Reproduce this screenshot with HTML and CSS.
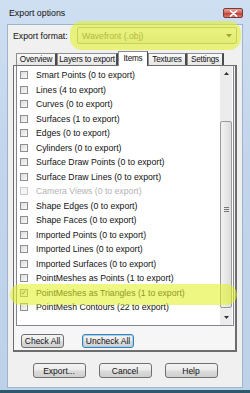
FILE: index.html
```html
<!DOCTYPE html>
<html lang="en">
<head>
  <meta charset="UTF-8" />
  <title>Export options</title>
  <meta name="viewport" content="width=device-width, initial-scale=1" />
  <link rel="stylesheet" href="styles.css">
</head>
<body>

  <div class="window">
    <div class="titlebar">
      <span class="title">Export options</span>
      <span class="close" aria-label="Close">
        <svg width="9" height="7" viewBox="0 0 9 7"><path d="M1.5 0.8 L7.5 6.2 M7.5 0.8 L1.5 6.2" stroke="#fff" stroke-width="1.6" stroke-linecap="round"/></svg>
      </span>
    </div>

    <div class="client">
      <div class="format-row">
        <label for="format">Export format:</label>
        <div class="select" id="format">
          <span>Wavefront (.obj)</span>
          <svg class="arrow" width="6" height="4" viewBox="0 0 6 4"><path d="M0 0 H6 L3 3.5 Z" fill="#444"/></svg>
        </div>
      </div>

      <div class="tabs">
        <span class="tab tab-overview">Overview</span>
        <span class="tab tab-layers">Layers to export</span>
        <span class="tab tab-items active">Items</span>
        <span class="tab tab-textures">Textures</span>
        <span class="tab tab-settings">Settings</span>
      </div>

      <div class="panel">
        <div class="listbox">
          <ul class="items">
            <li><span class="check"></span>Smart Points (0 to export)</li>
            <li><span class="check"></span>Lines (4 to export)</li>
            <li><span class="check"></span>Curves (0 to export)</li>
            <li><span class="check"></span>Surfaces (1 to export)</li>
            <li><span class="check"></span>Edges (0 to export)</li>
            <li><span class="check"></span>Cylinders (0 to export)</li>
            <li><span class="check"></span>Surface Draw Points (0 to export)</li>
            <li><span class="check"></span>Surface Draw Lines (0 to export)</li>
            <li class="disabled"><span class="check"></span>Camera Views (0 to export)</li>
            <li><span class="check"></span>Shape Edges (0 to export)</li>
            <li><span class="check"></span>Shape Faces (0 to export)</li>
            <li><span class="check"></span>Imported Points (0 to export)</li>
            <li><span class="check"></span>Imported Lines (0 to export)</li>
            <li><span class="check"></span>Imported Surfaces (0 to export)</li>
            <li><span class="check"></span>PointMeshes as Points (1 to export)</li>
            <li class="checked"><span class="check">&#10003;</span>PointMeshes as Triangles (1 to export)</li>
            <li><span class="check"></span>PointMesh Contours (22 to export)</li>
          </ul>
          <div class="scrollbar">
            <span class="sb-btn"><svg width="5" height="3" viewBox="0 0 5 3"><path d="M0 3 L2.5 0 L5 3 Z" fill="#333"/></svg></span>
            <div class="sb-track">
              <div class="sb-thumb"><span class="grip"></span></div>
            </div>
            <span class="sb-btn"><svg width="5" height="3" viewBox="0 0 5 3"><path d="M0 0 L2.5 3 L5 0 Z" fill="#333"/></svg></span>
          </div>
        </div>

        <div class="panel-buttons">
          <button class="btn btn-check">Check All</button>
          <button class="btn btn-uncheck default">Uncheck All</button>
        </div>
      </div>

      <div class="footer">
        <button class="btn">Export...</button>
        <button class="btn">Cancel</button>
        <button class="btn">Help</button>
      </div>
    </div>

    <!-- yellow marker highlights drawn over the dialog -->
    <div class="mark mark-format"></div>
    <div class="mark mark-row"></div>
  </div>

</body>
</html>
```

FILE: styles.css
```css
/* Reset */
* {
  box-sizing: border-box;
  margin: 0;
  padding: 0;
  font-family: 'Liberation Sans', Arial, sans-serif;
}

body {
  width: 250px;
  height: 393px;
  overflow: hidden;
  background: #c3d6ec;
  color: #111;
  font-size: 8.7px;
}

/* Window frame */
.window {
  position: relative;
  width: 250px;
  height: 393px;
  display: flex;
  flex-direction: column;
  background: linear-gradient(180deg, #cfdff2 0%, #c2d5ec 40%, #bdd1e9 100%);
  border-bottom: 3px solid #2c5a6b;
  padding: 0 7px 2px;
}

.titlebar {
  height: 24px;
  display: flex;
  align-items: flex-start;
  justify-content: space-between;
}
.title {
  margin-top: 8px;
  margin-left: 2px;
  font-size: 8.8px;
  color: #111;
}
.close {
  margin-top: 8px;
  width: 20px;
  height: 10px;
  border: 1px solid #7b3a3a;
  border-radius: 2px;
  background: linear-gradient(180deg, #e6a69c 0%, #d0625a 50%, #c2423a 55%, #d6776c 100%);
  display: flex;
  align-items: center;
  justify-content: center;
}

/* Client area */
.client {
  flex: 1;
  background: #f0f0f0;
  border: 1px solid #9fb4cc;
  padding: 2px 5px 0;
  display: flex;
  flex-direction: column;
}

.format-row {
  display: flex;
  align-items: center;
  height: 17px;
}
.format-row label {
  width: 64px;
}
.select {
  width: 160px;
  height: 17px;
  border: 1px solid #a5a5a5;
  border-radius: 2px;
  background: linear-gradient(180deg, #f6f6f6, #e2e2e2);
  display: flex;
  align-items: center;
  justify-content: space-between;
  padding: 0 4px 0 4px;
  color: #6e6e6e;
}

/* Tabs */
.tabs {
  margin-top: 7px;
  height: 14px;
  display: flex;
  align-items: flex-end;
  padding-left: 3px;
  position: relative;
  z-index: 1;
}
.tab {
  height: 12px;
  border: 1px solid #8c8e94;
  border-bottom: none;
  border-right: 2px solid #4a4a4a;
  background: linear-gradient(180deg, #fafafa, #e6e6e6);
  display: flex;
  align-items: center;
  justify-content: center;
  white-space: nowrap;
  font-size: 8.2px;
  letter-spacing: -0.2px;
  color: #111;
}
.tab-overview { width: 41px; }
.tab-layers { width: 61px; }
.tab-items { width: 30px; }
.tab-textures { width: 39px; }
.tab-settings { width: 37px; }
.tab.active {
  height: 15px;
  margin-bottom: -1px;
  background: #fff;
  border-right-width: 1px;
  padding-bottom: 2px;
}

/* Tab panel */
.panel {
  height: 287px;
  border: 1px solid #6d6d6d;
  border-bottom-width: 2px;
  border-right-width: 2px;
  background: #f6f6f6;
  padding: 0 1px 0 2px;
  display: flex;
  flex-direction: column;
}

.listbox {
  height: 260px;
  border: 1px solid #82878f;
  border-top: none;
  background: #fff;
  display: flex;
}

.items {
  list-style: none;
  flex: 1;
  padding-top: 2px;
}
.items li {
  height: 14.5px;
  display: flex;
  align-items: center;
  padding-left: 3px;
  white-space: nowrap;
}
.check {
  width: 8px;
  height: 8px;
  margin-right: 8px;
  border: 1px solid #8e8f8f;
  background: linear-gradient(135deg, #dcdcdc, #f9f9f9);
  font-size: 7px;
  line-height: 6px;
  text-align: center;
  color: #4a5a20;
}
.items li.disabled {
  color: #b3b3b3;
}
.items li.disabled .check {
  border-color: #c9c9c9;
  background: #f4f4f4;
}

/* Scrollbar */
.scrollbar {
  width: 12px;
  margin: 0 1px 0 0;
  display: flex;
  flex-direction: column;
  background: #ececec;
}
.sb-btn {
  height: 15px;
  display: flex;
  align-items: center;
  justify-content: center;
}
.sb-track {
  flex: 1;
  display: flex;
  flex-direction: column;
  justify-content: flex-end;
}
.sb-thumb {
  height: 187px;
  margin: 0 0 2px;
  border: 1px solid #9a9a9a;
  border-radius: 2px;
  background: linear-gradient(90deg, #f3f3f3, #dcdcdc);
  display: flex;
  align-items: center;
  justify-content: center;
}
.grip {
  width: 5px;
  height: 5px;
  border-top: 1px solid #777;
  border-bottom: 1px solid #777;
  position: relative;
  top: -5px;
}
.grip::after {
  content: "";
  display: block;
  margin-top: 1px;
  border-top: 1px solid #777;
}

/* Buttons */
.panel-buttons {
  margin-top: 8px;
  padding-left: 5px;
  display: flex;
  gap: 18px;
}
.btn {
  height: 14px;
  border: 1px solid #707070;
  border-radius: 3px;
  background: linear-gradient(180deg, #f4f4f4 0%, #ebebeb 48%, #dcdcdc 52%, #cfcfcf 100%);
  font-size: 8.5px;
  color: #111;
  cursor: pointer;
}
.btn-check { width: 43px; }
.btn-uncheck { width: 52px; }
.btn.default {
  border-color: #3c7fb1;
  box-shadow: inset 0 0 0 1px #9ed3f2;
}

.footer {
  margin-top: 11px;
  display: flex;
  justify-content: center;
  gap: 13px;
}
.footer .btn {
  width: 53px;
  height: 15px;
}

/* Yellow highlighter marks */
.mark {
  position: absolute;
  border-radius: 12px;
  background: rgba(226, 242, 40, 0.58);
  pointer-events: none;
}
.mark-format {
  left: 70px;
  top: 21px;
  width: 171px;
  height: 29px;
}
.mark-row {
  left: 10px;
  top: 284px;
  width: 227px;
  height: 21px;
  border-radius: 11px;
}
```
